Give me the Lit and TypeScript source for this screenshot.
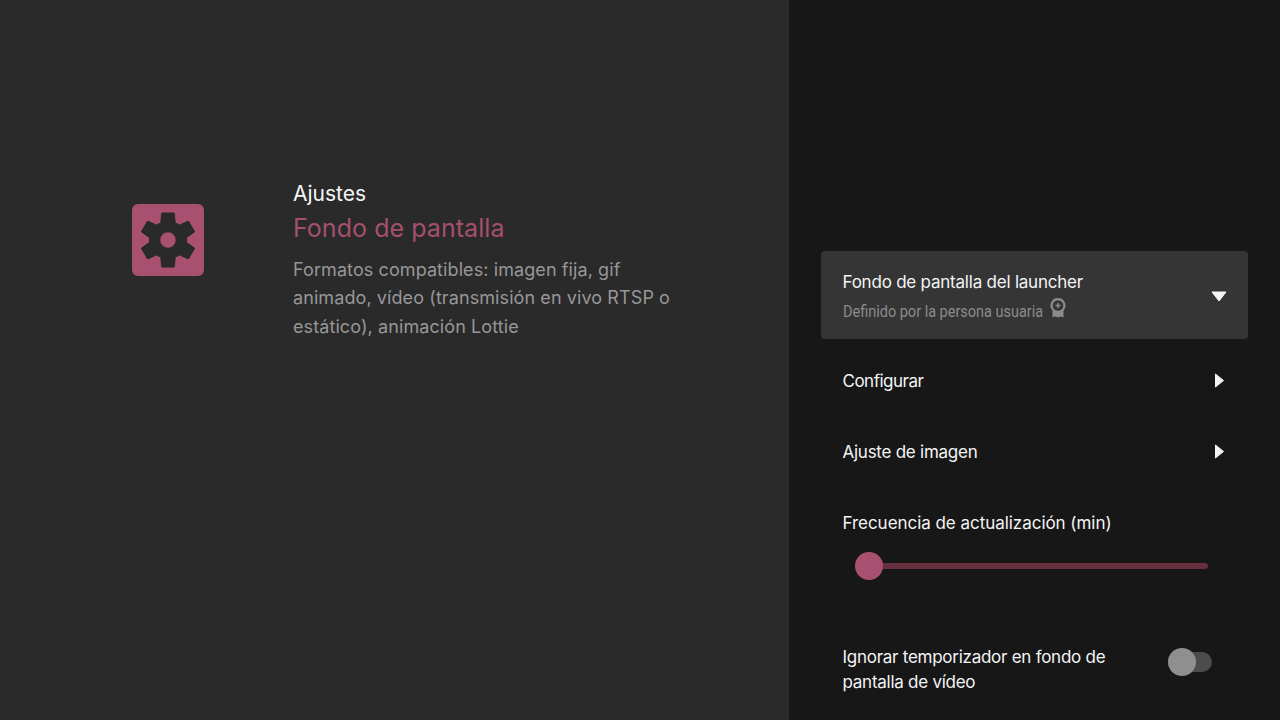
import { LitElement, html, css } from "lit";
import { customElement } from "lit/decorators.js";

const caret = html`<svg class="caret" width="12" height="15" viewBox="0 0 12 15"><path d="M2.500 1 L10.500 7.500 L2.500 14 Z" fill="#f5f5f5" stroke="#f5f5f5" stroke-linejoin="round"/></svg>`;

function gearPath(): string {
  const pts: string[] = [];
  const p = (r: number, deg: number) => {
    const a = (deg * Math.PI) / 180;
    pts.push(`${(36 + r * Math.cos(a)).toFixed(2)} ${(36 + r * Math.sin(a)).toFixed(2)}`);
  };
  for (let i = 0; i < 6; i++) {
    const c = -90 + i * 60;
    p(18.5, c - 22);
    p(27.5, c - 12.5);
    p(27.5, c + 12.5);
    p(18.5, c + 22);
  }
  return `M${pts.join(" L")} Z`;
}

@customElement("app-root")
export class AppRoot extends LitElement {
  static styles = css`
    :host { display: block; width: 1280px; height: 720px; overflow: hidden; font-family: Inter, "Liberation Sans", sans-serif; color: #f4f4f4; }
    .page { display: flex; width: 1280px; height: 720px; }
    .left { width: 789px; flex: none; box-sizing: border-box; background: #2a2a2b; padding: 180px 0 0 132px; display: flex; align-items: flex-start; }
    .badge { width: 72px; height: 72px; margin-top: 24px; border-radius: 6px; background: #a8506f; flex: none; }
    .badge svg { display: block; }
    .info { margin-left: 89px; width: 390px; }
    .crumb { font-size: 21px; line-height: 27px; color: #f5f5f5; }
    .title { font-size: 25px; line-height: 30px; margin-top: 6px; letter-spacing: 0.05px; color: #a5506e; }
    .desc { font-size: 18px; line-height: 28.5px; margin-top: 12.5px; letter-spacing: 0.09px; color: #979798; }
    .right { flex: 1; background: #171718; box-sizing: border-box; padding: 251px 32px 0; display: flex; flex-direction: column; }
    .card { height: 88px; flex: none; box-sizing: border-box; background: #353536; border-radius: 4px; padding: 0 21px 0 21.500px; display: flex; align-items: center; justify-content: space-between; }
    .label { font-size: 17px; line-height: 24px; letter-spacing: -0.2px; color: #f4f4f4; }
    .label.configurar { letter-spacing: -0.5px; }
    .label.ajuste { letter-spacing: -0.25px; }
    .label.frecuencia { letter-spacing: -0.04px; }
    .label.card-label { margin-top: 2px; letter-spacing: -0.22px; }
    .sub { display: flex; align-items: flex-end; height: 24px; margin-top: 5px; font-family: Roboto, sans-serif; font-size: 16px; line-height: 22px; color: #8b8b8c; }
    .sub span { display: inline-block; width: 207px; white-space: nowrap; transform: scaleX(0.905); transform-origin: left center; }
    .medal { display: block; margin-bottom: 5px; }
    .row { height: 71px; flex: none; box-sizing: border-box; padding: 0 23px 0 21.500px; display: flex; align-items: center; justify-content: space-between; }
    .first { margin-top: 6px; }
    .freq { padding: 0 21.500px; }
    .freq .label { padding-top: 24px; }
    .slider { position: relative; height: 6px; margin: 28px 18.500px 0 26.500px; background: #67303f; border-radius: 3px; }
    .thumb { position: absolute; left: -14px; top: -11px; width: 28px; height: 28px; border-radius: 50%; background: #a8506f; }
    .toggle-row { display: flex; align-items: flex-start; justify-content: space-between; padding: 0 36px 0 21.500px; margin-top: 76px; }
    .toggle-row .label { width: 300px; line-height: 25px; letter-spacing: -0.26px; }
    .toggle { position: relative; width: 44px; height: 20px; margin-top: 7px; border-radius: 10px; background: #4c4c4d; flex: none; }
    .knob { position: absolute; left: 0; top: -4px; width: 28px; height: 28px; border-radius: 50%; background: #8f8f90; }
    .caret { display: block; }
  `;
  render() {
    return html`<div class="page">
      <section class="left">
        <div class="badge">
          <svg width="72" height="72" viewBox="0 0 72 72">
            <path fill="#2a2a2b" stroke="#2a2a2b" stroke-width="1.500" stroke-linejoin="round" fill-rule="evenodd" d="${gearPath()} M36 27.500 A8.500 8.500 0 1 0 36 44.500 A8.500 8.500 0 1 0 36 27.500 Z"/>
          </svg>
        </div>
        <div class="info">
          <div class="crumb">Ajustes</div>
          <div class="title">Fondo de pantalla</div>
          <div class="desc">Formatos compatibles: imagen fija, gif animado, vídeo (transmisión en vivo RTSP o estático), animación Lottie</div>
        </div>
      </section>
      <section class="right">
        <div class="card">
          <div>
            <div class="label card-label">Fondo de pantalla del launcher</div>
            <div class="sub"><span>Definido por la persona usuaria</span>
              <svg class="medal" width="16" height="20" viewBox="0 0 16 20"><path fill="#8b8b8c" fill-rule="evenodd" d="M8 0a7.500 7.500 0 0 1 5.500 12.600V19.500L11 18.400 8 19.500 5 18.400 2.500 19.500V12.600A7.500 7.500 0 0 1 8 0zm0 2.200a5.300 5.300 0 1 0 0 10.600A5.300 5.300 0 0 0 8 2.200z"/><path fill="#8b8b8c" d="M7.200 5H8.800V6.700H10.500V8.300H8.800V10H7.200V8.300H5.500V6.700H7.200z"/></svg>
            </div>
          </div>
          <svg class="caret" width="16" height="11" viewBox="0 0 16 11" style="margin-top:3px"><path d="M1 1 H15 L8 10 Z" fill="#f5f5f5" stroke="#f5f5f5" stroke-linejoin="round"/></svg>
        </div>
        <div class="row first"><div class="label configurar">Configurar</div>${caret}</div>
        <div class="row"><div class="label ajuste">Ajuste de imagen</div>${caret}</div>
        <div class="freq">
          <div class="label frecuencia">Frecuencia de actualización (min)</div>
          <div class="slider"><div class="thumb"></div></div>
        </div>
        <div class="toggle-row">
          <div class="label">Ignorar temporizador en fondo de pantalla de vídeo</div>
          <div class="toggle"><div class="knob"></div></div>
        </div>
      </section>
    </div>`;
  }
}
